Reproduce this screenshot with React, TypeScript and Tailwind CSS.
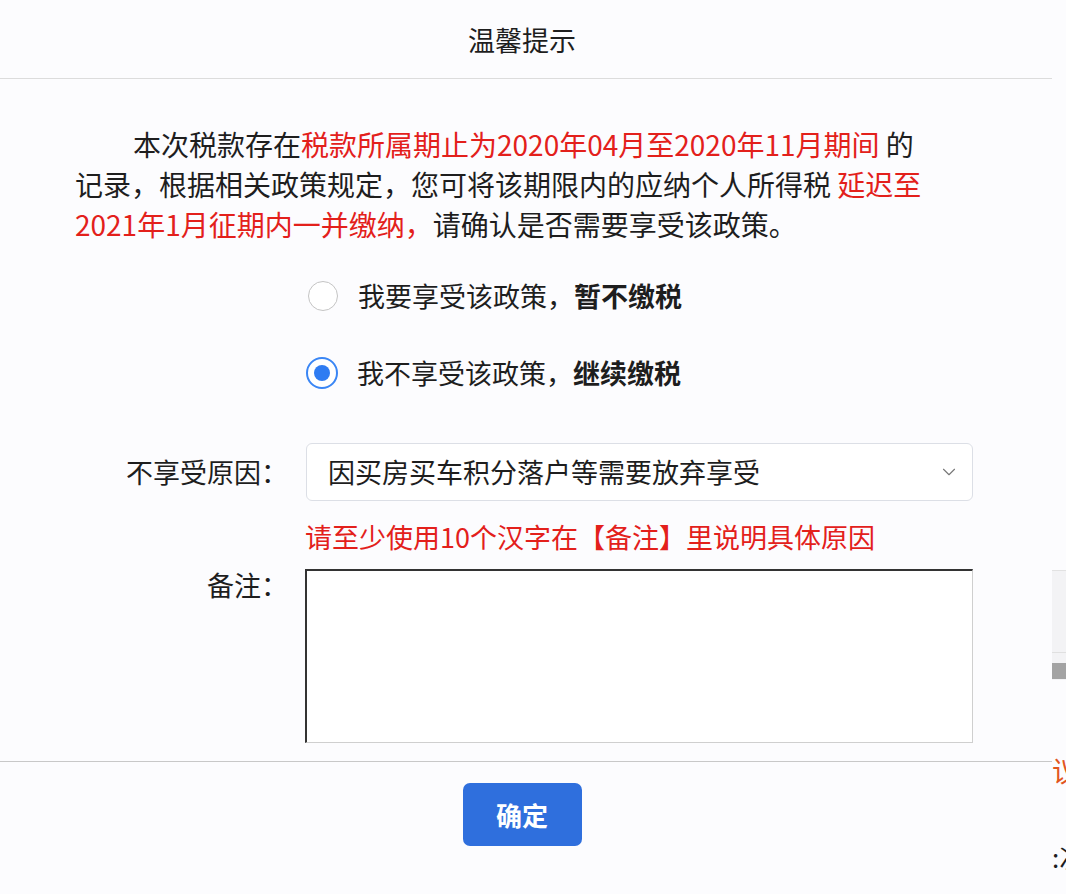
import { ChevronDown } from "lucide-react";

const FONT = "font-['Noto_Sans_CJK_SC','Noto_Sans',sans-serif]";

function Radio({ checked }: { checked?: boolean }) {
  return checked ? (
    <span className="w-[32px] h-[32px] rounded-full border-2 border-[#3a86f5] bg-white flex items-center justify-center shrink-0">
      <span className="w-[16px] h-[16px] rounded-full bg-[#2f7cf2]" />
    </span>
  ) : (
    <span className="w-[30px] h-[30px] rounded-full border border-[#c4c4c4] bg-white shrink-0" />
  );
}

export default function App() {
  return (
    <div className={`${FONT} w-[1066px] h-[894px] overflow-hidden bg-[#fcfcfe] text-[#1e1e1e] flex`}>
      <div className="w-[1052px] shrink-0 flex flex-col">
        <div className="h-[79px] border-b border-[#dcdcdc] flex items-center justify-center pr-[8px] pt-[2px] text-[27px]">
          温馨提示
        </div>

        <div className="pt-[45px] pl-[75px] text-[28px] leading-[40px]">
          <div className="whitespace-pre pl-[58px]">
            本次税款存在<span className="text-[#e3201b]">税款所属期止为2020年04月至2020年11月期间</span> 的
          </div>
          <div className="whitespace-pre">
            记录，根据相关政策规定，您可将该期限内的应纳个人所得税 <span className="text-[#e3201b]">延迟至</span>
          </div>
          <div className="whitespace-pre">
            <span className="text-[#e3201b]">2021年1月征期内一并缴纳，</span>请确认是否需要享受该政策。
          </div>
        </div>

        <div className="pl-[308px] mt-[36px] flex flex-col gap-[45px] text-[27px]">
          <label className="flex items-center gap-[20px] h-[32px]">
            <Radio />
            <span>
              我要享受该政策，<span className="font-bold">暂不缴税</span>
            </span>
          </label>
          <label className="flex items-center gap-[19px] h-[32px] -ml-[2px]">
            <Radio checked />
            <span>
              我不享受该政策，<span className="font-bold">继续缴税</span>
            </span>
          </label>
        </div>

        <div className="mt-[54px] flex items-center">
          <div className="w-[290px] text-right text-[27px] pr-[2px]">不享受原因：</div>
          <div className="ml-[16px] w-[667px] h-[58px] rounded-[6px] border border-[#dcdfe6] bg-white flex items-center justify-between pl-[21px] pr-[12px] text-[27px]">
            <span>因买房买车积分落户等需要放弃享受</span>
            <ChevronDown size={22} strokeWidth={1.2} className="text-[#777]" />
          </div>
        </div>

        <div className="pl-[305px] mt-[18px] text-[27px] leading-[36px] text-[#e3201b]">
          请至少使用10个汉字在【备注】里说明具体原因
        </div>

        <div className="mt-[14px] flex items-start">
          <div className="w-[290px] text-right text-[27px] pr-[2px] pt-[1px] leading-[30px]">备注：</div>
          <textarea
            readOnly
            className="ml-[15px] w-[668px] h-[174px] resize-none bg-white border-t-2 border-l-2 border-t-[#333] border-l-[#333] border-r border-b border-r-[#cfcfcf] border-b-[#cfcfcf] outline-none"
          />
        </div>

        <div className="mt-[18px] border-t border-[#c8c8c8] flex justify-center pr-[8px] pt-[21px]">
          <button className="w-[119px] h-[63px] rounded-[7px] bg-[#2f6fdd] text-white text-[26px] font-bold">
            确定
          </button>
        </div>
      </div>

      <div className="flex-1 overflow-hidden flex flex-col">
        <div className="mt-[570px] h-[110px] flex flex-col bg-[#f3f3f5] border-t border-[#e2e2e2]">
          <div className="h-[82px] border-b border-[#e0e0e0]" />
          <div className="mt-[10px] h-[16px] bg-[#a3a3a3]" />
        </div>
        <div className="mt-[75px] text-[28px] leading-[30px] text-[#e2561e] whitespace-nowrap">议</div>
        <div className="mt-[57px] text-[26px] leading-[30px] whitespace-nowrap">:次</div>
      </div>
    </div>
  );
}
